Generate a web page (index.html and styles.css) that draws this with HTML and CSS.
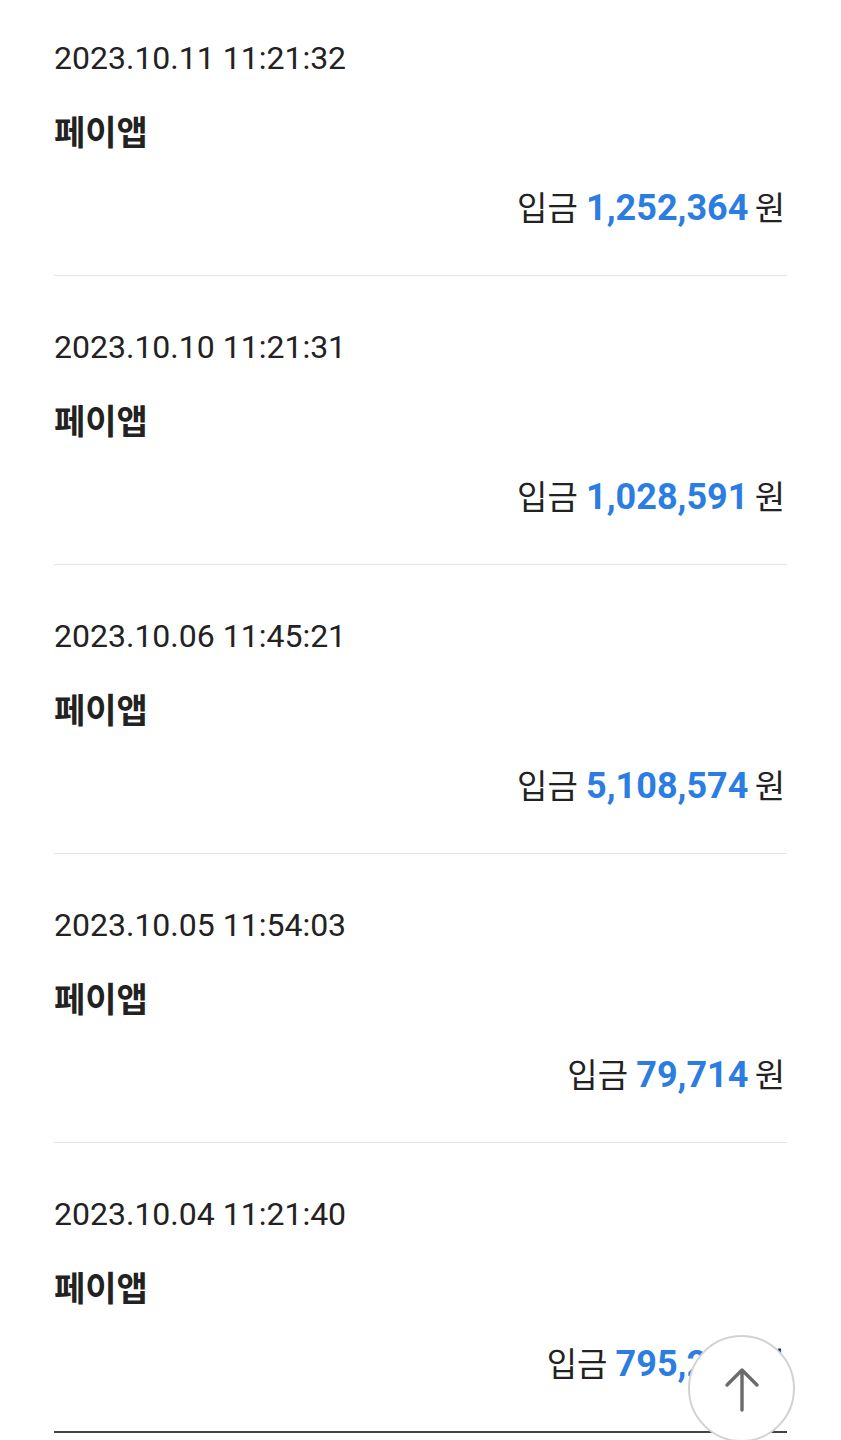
FILE: index.html
```html
<!DOCTYPE html>
<html lang="ko">
<head>
  <meta charset="UTF-8" />
  <meta name="viewport" content="width=device-width, initial-scale=1.0"/>
  <title>입금 내역</title>
  <link rel="stylesheet" href="styles.css">
</head>
<body>
  <ul class="history">
    <li class="item">
      <p class="date">2023.10.11 11:21:32</p>
      <p class="name">페이앱</p>
      <p class="amount">입금 <strong>1,252,364</strong> 원</p>
    </li>
    <li class="item">
      <p class="date">2023.10.10 11:21:31</p>
      <p class="name">페이앱</p>
      <p class="amount">입금 <strong>1,028,591</strong> 원</p>
    </li>
    <li class="item">
      <p class="date">2023.10.06 11:45:21</p>
      <p class="name">페이앱</p>
      <p class="amount">입금 <strong>5,108,574</strong> 원</p>
    </li>
    <li class="item">
      <p class="date">2023.10.05 11:54:03</p>
      <p class="name">페이앱</p>
      <p class="amount">입금 <strong>79,714</strong> 원</p>
    </li>
    <li class="item last">
      <p class="date">2023.10.04 11:21:40</p>
      <p class="name">페이앱</p>
      <p class="amount">입금 <strong>795,210</strong> 원</p>
    </li>
  </ul>

  <button class="to-top" aria-label="맨 위로">
    <svg width="40" height="46" viewBox="0 0 40 46">
      <path d="M20 44 V4 M5 19 L20 4 L35 19" fill="none" stroke="#6b6b6b" stroke-width="3.4" stroke-linecap="round" stroke-linejoin="round"/>
    </svg>
  </button>
</body>
</html>
```

FILE: styles.css
```css
* { box-sizing: border-box; }

body {
  font-family: Roboto, "Noto Sans CJK KR", sans-serif;
  background: #fff;
  margin: 0;
  color: #222;
  overflow: hidden;
}

.history {
  list-style: none;
  margin: -13px 0 0;
  padding: 0 54px;
}

.item {
  padding: 49px 0 47px;
  border-bottom: 1px solid #e6e6e6;
}

.item.last {
  padding-bottom: 47px;
  border-bottom: 2px solid #444;
}

.item p {
  margin: 0;
  height: 44px;
  font-size: 32px;
  line-height: 44px;
  white-space: nowrap;
}

.item .name {
  margin-top: 29px;
  font-family: "Noto Sans CJK KR", sans-serif;
  font-weight: 700;
  font-size: 34px;
}

.item .amount {
  margin-top: 31px;
  text-align: right;
  font-family: "Noto Sans CJK KR", sans-serif;
  font-size: 33px;
  padding-right: 2px;
}

.amount strong {
  font-family: Roboto, sans-serif;
  font-size: 36px;
  font-weight: 700;
  color: #2b7de1;
  margin: 0 -3px 0 -1px;
}

.to-top {
  position: fixed;
  right: 46px;
  bottom: -2px;
  width: 107px;
  height: 107px;
  border-radius: 50%;
  border: 2px solid #d2d2d2;
  background: #fff;
  display: flex;
  align-items: center;
  justify-content: center;
  padding: 0;
  cursor: pointer;
}
```
